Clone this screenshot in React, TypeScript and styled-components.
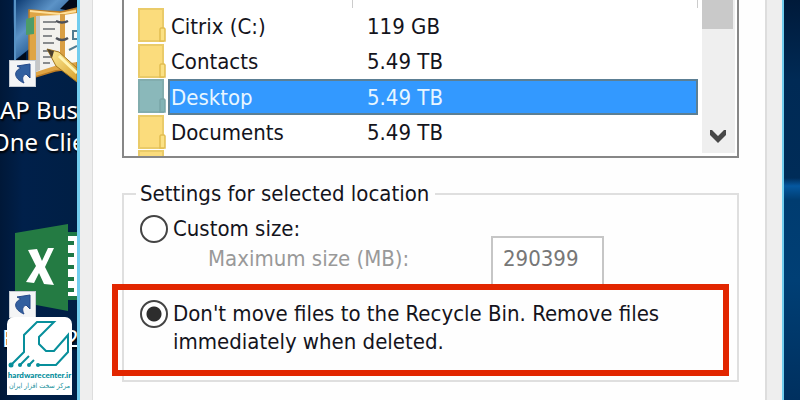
import React, { useState } from 'react';
import styled, { createGlobalStyle } from 'styled-components';

const Global = createGlobalStyle`
  *, *::before, *::after { box-sizing: border-box; }
  body { margin: 0; overflow: hidden; font-family: 'DejaVu Sans Condensed', 'DejaVu Sans', sans-serif; font-size: 22px; color: #14141c; }
  input, button { font: inherit; }
`;

const Screen = styled.div`
  display: flex;
  height: 100vh;
  overflow: hidden;
  background: #001f43;
`;

const Desktop = styled.aside`
  position: relative;
  flex: 0 0 77px;
  overflow: hidden;
  display: flex;
  flex-direction: column;
  background: linear-gradient(90deg, #001838, #00204a 30%, #001f45);
`;

const Wallpaper = styled.div`
  flex: 0 0 16px;
  background: linear-gradient(#001a3a 0, #002a55 80px, #002c58 178px, #0558a0 186px, #003c70 200px, #003f75 280px, #00305f 100%);
`;

const Shortcut = styled.a`
  display: flex;
  flex-direction: column;
  color: #fff;
  text-decoration: none;
  & > svg { display: block; flex: none; }
`;

const ShortcutLabel = styled.span`
  font-family: 'Noto Sans', sans-serif;
  font-size: 24px;
  line-height: 32px;
  white-space: pre;
  text-shadow: 1px 2px 2px #000;
  padding-top: 6px;
`;

const Line = styled.span<{ $outdent?: number }>`
  display: block;
  margin-left: -${p => p.$outdent ?? 0}px;
`;

const ExcelShortcut = styled(Shortcut)`
  margin-top: 66px;
`;

const ExcelLabel = styled(ShortcutLabel)`
  padding: 3px 0 0 2px;
`;

const Watermark = styled.div`
  position: absolute;
  left: 7px;
  right: 5px;
  bottom: 5px;
  height: 78px;
  border-radius: 7px 7px 0 0;
  background: #fff;
  display: flex;
  flex-direction: column;
  align-items: center;
  white-space: nowrap;
`;

const SiteName = styled.span`
  font: 900 8px/11px Lato, sans-serif;
  color: #008c9b;
`;

const SiteTagline = styled.span`
  font: 7px/11px 'DejaVu Sans Condensed', 'DejaVu Sans', sans-serif;
  color: #148f9b;
`;

const Dialog = styled.main`
  flex: 1;
  min-width: 0;
  display: flex;
  background: #eee;
  border: solid #72cdee;
  border-width: 0 2px 0 3px;
  padding: 0 15px 0 12px;
`;

const Sheet = styled.form`
  flex: 1;
  min-width: 0;
  background: #fefefe;
  border: solid #ddd;
  border-width: 0 2px 0 1px;
  padding: 0 26px 0 29px;
`;

const ListBox = styled.section`
  display: flex;
  justify-content: space-between;
  height: 158px;
  overflow: hidden;
  border: 2px solid #878787;
  border-top: 0;
  padding: 0 2px 3px 14px;
  background: #fff;
`;

const Table = styled.table`
  flex: 1;
  margin-right: 4px;
  border-collapse: separate;
  border-spacing: 0;
  table-layout: fixed;
  height: max-content;
`;

const HeadCell = styled.th<{ $width?: number; $plain?: boolean }>`
  width: ${p => (p.$width ? `${p.$width}px` : 'auto')};
  height: 8px;
  padding: 0;
  border-right: ${p => (p.$plain ? 0 : 1)}px solid #ccc;
`;

const Row = styled.tr`
  height: 36px;
  cursor: default;
  &:nth-child(even) { height: 35px; }
`;

const Cell = styled.td<{ $selected?: boolean; $last?: boolean }>`
  padding: 1px 0 0 ${p => (p.$last ? 14 : 1)}px;
  line-height: 30px;
  color: ${p => (p.$selected ? '#e8f6ff' : 'inherit')};
  background: ${p => (p.$selected ? '#3399ff' : 'transparent')};
  border: solid ${p => (p.$selected ? '#5c7f94' : 'transparent')};
  border-width: ${p => (p.$last ? '2px 2px 2px 0' : '2px 0 2px 2px')};
`;

const IconCell = styled.td`
  padding: 0;
  vertical-align: top;
  & > svg { display: block; }
`;

const ScrollBar = styled.div`
  flex: 0 0 33px;
  display: flex;
  flex-direction: column;
  justify-content: space-between;
  background: #efefef;
`;

const Thumb = styled.div`
  height: 29px;
  margin-right: 2px;
  background: #c9c9c9;
`;

const ScrollButton = styled.button`
  height: 34px;
  padding: 0 0 0 8px;
  border: 0;
  background: none;
  & > svg { display: block; }
`;

const Group = styled.fieldset`
  position: relative;
  margin: 22px 0 0;
  padding: 0 14px 0 16px;
  min-width: 0;
  height: 202px;
  border: 2px solid #dfdfdf;
`;

const Legend = styled.legend`
  margin-left: -4px;
  padding: 0 6px 0 4px;
  line-height: 28px;
`;

const Option = styled.label`
  display: flex;
  align-items: flex-start;
  gap: 5px;
  padding-top: 7px;
  line-height: 28px;
`;

const Radio = styled.input`
  appearance: none;
  flex: none;
  width: 28px;
  height: 28px;
  margin: 0;
  border: 2px solid #444;
  border-radius: 50%;
  background: #fff;
  &:checked { background: radial-gradient(circle, #2d2d2d 7px, #fff 8px); }
`;

const SizeRow = styled.div`
  display: flex;
  align-items: flex-start;
  height: 48px;
  padding-left: 68px;
  margin-top: -7px;
  color: #999;
`;

const SizeLabel = styled.label`
  width: 283px;
  padding-top: 9px;
  line-height: 28px;
`;

const SizeInput = styled.input`
  width: 113px;
  height: 50px;
  padding: 0 10px 6px;
  border: 2px solid #c6c6c6;
  border-radius: 0;
  background: #fff;
  color: #777;
`;

const Highlight = styled.div`
  position: absolute;
  left: -12px;
  right: 8px;
  bottom: 4px;
  height: 92px;
  border: 6px solid #e22600;
  pointer-events: none;
`;

const RemoveOption = styled(Option)`
  padding-top: 16px;
`;

const FolderIcon = ({ selected }: { selected: boolean }) => (
  <svg width="28" height="34" viewBox="0 0 28 34" aria-hidden="true">
    <rect x="1" y="1" width="24" height="32" fill={selected ? '#8ab8ba' : '#fbdc7c'} stroke={selected ? '#82adae' : '#eacb69'} strokeWidth="2" />
    <path d="M22 33V21l1-1h3l1 1v12z" fill={selected ? '#82b3b5' : '#fbe184'} stroke={selected ? '#7aa5a8' : '#e2bd50'} strokeWidth="1.500" />
  </svg>
);

const ArrowBadge = ({ x, y }: { x: number; y: number }) => (
  <g transform={`translate(${x} ${y})`}>
    <rect x=".5" y=".5" width="26" height="26" fill="#f4f5f6" stroke="#c5cbd2" />
    <path d="M8 6l13-2v14l-4-4c-4 2-4 5-2 9-10-4-11-12-3-15z" fill="#315f9f" stroke="#24498a" />
  </g>
);

const BookIcon = () => (
  <svg width="77" height="88" viewBox="0 0 77 88" aria-hidden="true">
    <defs>
      <linearGradient id="sky" x2="1" y2="1"><stop stopColor="#08366e" /><stop offset=".35" stopColor="#5c93c7" /><stop offset=".7" stopColor="#12467e" /></linearGradient>
      <linearGradient id="pencil" x2="1" y2="1"><stop stopColor="#fff0a0" /><stop offset="1" stopColor="#d8a22c" /></linearGradient>
    </defs>
    <path d="M13 0h64v12L15 60z" fill="url(#sky)" />
    <path d="M15 0v62" stroke="#5792c5" strokeWidth="2" />
    <path d="M60 9l9-9h8v12zM14 62l12-10v12z" fill="#020a18" />
    <path d="M29 10l32 2 16-4v60l-22 3-20 6-6-14z" fill="#dfa545" stroke="#bd7c24" strokeWidth="1.500" />
    <path d="M30 11l30 3 16-3" fill="none" stroke="#ffe09a" strokeWidth="2" />
    <path d="M36 16l25-1v49l-25 8z" fill="#f2f1ed" />
    <path d="M36 16h4v54l-4 2z" fill="#c5c6c7" />
    <path d="M64 15l13-2v49l-13 2z" fill="#fbfaf5" />
    <path d="M60 14h5v50l-5 2z" fill="#d99f43" />
    <path d="M26 19l8-2v17l-8 1z" fill="#4c9c68" />
    <path d="M43 22h13M43 29h12M43 36h9M43 43h11M43 51h6M43 57h8M43 63h7" stroke="#65696d" strokeWidth="1.500" />
    <path d="M56 21q6 3 12 0M56 38q6 4 12 0" fill="none" stroke="#4d5159" strokeWidth="2.500" />
    <path d="M77 31h-4v8h4M69 50l8-4" fill="none" stroke="#527d91" strokeWidth="2" />
    <path d="M47 49l12 3 18 16v14L56 66z" fill="url(#pencil)" stroke="#a47620" />
    <path d="M47 49l7 2-2 7z" fill="#493e2c" />
    <path d="M59 56l18 17" stroke="#fff5b5" strokeWidth="3" />
    <ArrowBadge x={9} y={60} />
  </svg>
);

const ExcelIcon = () => (
  <svg width="77" height="95" viewBox="0 0 77 95" aria-hidden="true">
    <path d="M66 8h11v68H66z" fill="#1c7846" />
    <path d="M67 12h10v60H67z" fill="#fff" />
    <path d="M67 19h7M67 31h7M67 43h7M67 55h7M67 66h7" stroke="#1c7846" strokeWidth="4" />
    <path d="M15 9L68 0v87l-53-10z" fill="#247b43" />
    <path d="M28 26l9-1 5 12 6-13h6L45 43l9 18-10-1-5-11-5 10-8-1 10-16z" fill="#fff" />
    <ArrowBadge x={9} y={67} />
  </svg>
);

const WrenchLogo = () => (
  <svg width="63" height="53" viewBox="0 0 63 53" fill="none" stroke="#078f9b" strokeWidth="2" aria-hidden="true">
    <path d="M3 48L16 35V18L29 5H46L31 20v7l7 7h8L60 18V35L48 48H30" />
    <path d="M12 48l9-9M21 48l5-5" />
    <g fill="#078f9b" stroke="none"><circle cx="3" cy="48" r="2.500" /><circle cx="12" cy="48" r="2" /><circle cx="21" cy="48" r="2" /><circle cx="30" cy="48" r="2" /></g>
  </svg>
);

const locations = [
  { name: 'Citrix (C:)', size: '119 GB' },
  { name: 'Contacts', size: '5.49 TB' },
  { name: 'Desktop', size: '5.49 TB' },
  { name: 'Documents', size: '5.49 TB' },
];

export default function App() {
  const [selected, setSelected] = useState('Desktop');
  const [mode, setMode] = useState('remove');
  return (
    <Screen>
      <Global />
      <Desktop>
        <Shortcut href="#sap">
          <BookIcon />
          <ShortcutLabel><Line>AP Bus</Line><Line $outdent={9}>One Clie</Line></ShortcutLabel>
        </Shortcut>
        <ExcelShortcut href="#excel"><ExcelIcon /><ExcelLabel>Excel 2</ExcelLabel></ExcelShortcut>
        <Watermark>
          <WrenchLogo />
          <SiteName>hardwarecenter.ir</SiteName>
          <SiteTagline dir="rtl" lang="fa">مرکز سخت افزار ایران</SiteTagline>
        </Watermark>
      </Desktop>
      <Dialog>
        <Sheet>
          <ListBox>
            <Table>
              <thead>
                <tr><HeadCell $width={30} $plain /><HeadCell $width={185} /><HeadCell /></tr>
              </thead>
              <tbody>
                {locations.map(({ name, size }) => (
                  <Row key={name} onClick={() => setSelected(name)}>
                    <IconCell><FolderIcon selected={selected === name} /></IconCell>
                    <Cell $selected={selected === name}>{name}</Cell>
                    <Cell $selected={selected === name} $last>{size}</Cell>
                  </Row>
                ))}
                <Row><IconCell><FolderIcon selected={false} /></IconCell><Cell /><Cell $last /></Row>
              </tbody>
            </Table>
            <ScrollBar>
              <Thumb />
              <ScrollButton type="button" aria-label="Scroll down">
                <svg width="16" height="16" viewBox="0 0 16 16"><path d="M0 2v5l8 8 8-8V2h-2L8 8 2 2z" fill="#484848" /></svg>
              </ScrollButton>
            </ScrollBar>
          </ListBox>
          <Group>
            <Legend>Settings for selected location</Legend>
            <Option>
              <Radio type="radio" name="mode" checked={mode === 'custom'} onChange={() => setMode('custom')} />
              <span>Custom size:</span>
            </Option>
            <SizeRow>
              <SizeLabel htmlFor="max">Maximum size (MB):</SizeLabel>
              <SizeInput id="max" disabled={mode !== 'custom'} defaultValue="290399" />
            </SizeRow>
            <RemoveOption>
              <Radio type="radio" name="mode" checked={mode === 'remove'} onChange={() => setMode('remove')} />
              <span>Don't move files to the Recycle Bin. Remove files<br />immediately when deleted.</span>
            </RemoveOption>
            <Highlight />
          </Group>
        </Sheet>
      </Dialog>
      <Wallpaper />
    </Screen>
  );
}
